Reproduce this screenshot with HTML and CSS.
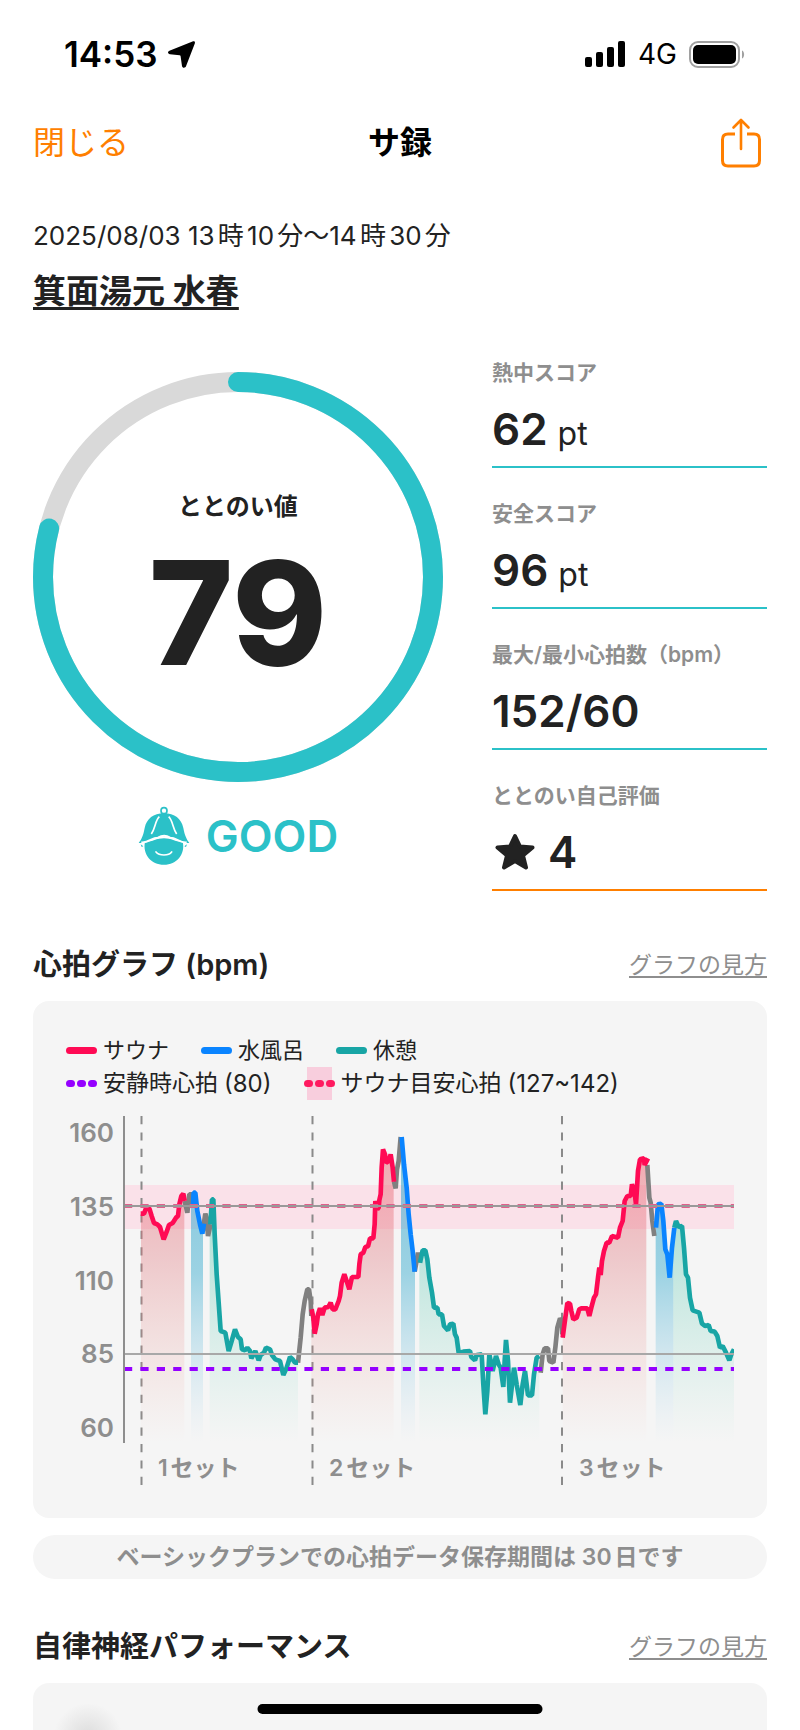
FILE: index.html
```html
<!DOCTYPE html>
<html lang="ja">
<head>
    <meta charset="UTF-8">
    <meta name="viewport" content="width=device-width, initial-scale=1.0">
    <title>サ録</title>
    <link rel="stylesheet" href="styles.css">
</head>
<body>
    <div class="app">
        <div class="status-bar">
            <div class="status-left">
                <span class="clock">14:53</span>
                <svg width="27" height="27" viewBox="0 0 27 27"><path d="M24.500 .6C26.200 -.2 27.400 .8 26.800 2.400L18 25.200C17.300 27.200 14.300 27.200 14 24.900L12.600 15.200C12.500 14.600 12.200 14.300 11.600 14.200L2 13.200C-.4 12.900 -.7 10.600 1.400 9.800Z"/></svg>
            </div>
            <div class="status-right">
                <svg width="41" height="26" viewBox="0 0 41 26">
                    <rect x="0" y="16" width="7" height="10" rx="2"/>
                    <rect x="11" y="11" width="7" height="15" rx="2"/>
                    <rect x="22" y="6" width="7" height="20" rx="2"/>
                    <rect x="33" y="0" width="7" height="26" rx="2"/>
                </svg>
                <span class="network">4G</span>
                <svg width="56" height="27" viewBox="0 0 56 27">
                    <rect x="1" y="1" width="49" height="25" rx="8" fill="none" stroke="#a0a0a0" stroke-width="2"/>
                    <rect x="4" y="4" width="43" height="19" rx="5"/>
                    <path d="M53 9.5C55.8 10.5 55.8 16.5 53 17.5Z" fill="#a0a0a0"/>
                </svg>
            </div>
        </div>

        <header class="nav">
            <button class="close" type="button">閉じる</button>
            <h1>サ録</h1>
            <button class="share" type="button" aria-label="共有">
                <svg width="40" height="50" viewBox="0 0 40 50" fill="none" stroke="#ff7f00" stroke-width="3" stroke-linecap="round" stroke-linejoin="round">
                    <path d="M14 16H7Q1.5 16 1.5 21.5V42.500Q1.500 48 7 48H33Q38.500 48 38.500 42.500V21.500Q38.500 16 33 16H26" stroke-linecap="butt"/>
                    <path d="M20 31V2.500M12.500 9.500L20 2L27.500 9.500" stroke-width="2.600"/>
                </svg>
            </button>
        </header>

        <main>
            <p class="date">2025/08/03 13時10分〜14時30分</p>
            <a class="venue" href="#">箕面湯元 水春</a>

            <section class="summary">
                <div class="total">
                    <div class="gauge">
                        <svg viewBox="0 0 410 410" fill="none" stroke-width="20">
                            <circle cx="205" cy="205" r="195" stroke="#d9d9d9"/>
                            <circle cx="205" cy="205" r="195" stroke="#2bc1c8" stroke-linecap="round" pathLength="100" stroke-dasharray="79 100" transform="rotate(-90 205 205)"/>
                        </svg>
                        <div class="gauge-text">
                            <span class="gauge-label">ととのい値</span>
                            <span class="gauge-value">79</span>
                        </div>
                    </div>
                    <div class="rank">
                        <svg width="52" height="60" viewBox="53 46 156 180">
                            <circle cx="131" cy="60" r="9" fill="none" stroke="#2bc1c8" stroke-width="5"/>
                            <path d="M131 68C163 68 183 84 189 112C193 134 199 146 207 157C194 157 187 154 180 150C164 148 151 137 131 137C111 137 97 148 82 150C76 154 68 157 55 157C64 146 69 134 73 112C79 84 99 68 131 68Z" fill="#2bc1c8"/>
                            <path d="M74 153C92 156 106 143 131 143C155 143 170 156 187 153C196 190 169 222 131 222C92 222 66 190 74 153Z" fill="#2bc1c8"/>
                            <path d="M61 161L69 167L64 169ZM200 161L192 167L197 169Z" fill="#2bc1c8"/>
                            <path d="M117 78C104 90 105 114 93 130M145 78C158 90 157 114 169 130" fill="none" stroke="#fff" stroke-width="5"/>
                            <path d="M63 155C84 158 95 140 113 141C126 133 137 133 149 141C167 140 180 158 199 155" fill="none" stroke="#fff" stroke-width="6"/>
                            <path d="M107 184C117 196 145 196 154 184" fill="none" stroke="#fff" stroke-width="5" stroke-linecap="round"/>
                        </svg>
                        <span>GOOD</span>
                    </div>
                </div>

                <dl class="scores">
                    <div class="score">
                        <dt>熱中スコア</dt>
                        <dd>62 <small>pt</small></dd>
                    </div>
                    <div class="score">
                        <dt>安全スコア</dt>
                        <dd>96 <small>pt</small></dd>
                    </div>
                    <div class="score">
                        <dt>最大/最小心拍数（bpm）</dt>
                        <dd>152/60</dd>
                    </div>
                    <div class="score self">
                        <dt>ととのい自己評価</dt>
                        <dd>
                            <svg width="46" height="38" viewBox="-3 0 46 38"><path d="M20 3L25 13.500L37.500 14.500L28 22.500L31 34.500L20 28L9 34.500L12 22.500L2.500 14.500L15 13.500Z" fill="#222" stroke="#222" stroke-width="4" stroke-linejoin="round"/></svg>
                            4
                        </dd>
                    </div>
                </dl>
            </section>

            <section class="block">
                <div class="block-head">
                    <h2>心拍グラフ (bpm)</h2>
                    <a href="#">グラフの見方</a>
                </div>
                <div class="card">
                    <ul class="legend">
                        <li><i class="bar sauna"></i>サウナ</li>
                        <li><i class="bar water"></i>水風呂</li>
                        <li><i class="bar rest"></i>休憩</li>
                    </ul>
                    <ul class="legend ranges">
                        <li><i class="dots resting"><b></b><b></b><b></b></i>安静時心拍 <span>(80)</span></li>
                        <li><i class="dots target"><b></b><b></b><b></b></i>サウナ目安心拍 <span>(127~142)</span></li>
                    </ul>

                    <svg class="chart" viewBox="0 0 668 372" role="img" aria-label="心拍グラフ">
                        <defs>
                            <linearGradient id="gSauna" gradientUnits="userSpaceOnUse" x1="0" y1="100" x2="0" y2="1024">
                                <stop offset="0" stop-color="#f06070" stop-opacity=".55"/>
                                <stop offset=".4" stop-color="#e07078" stop-opacity=".34"/>
                                <stop offset="1" stop-color="#f0a090" stop-opacity="0"/>
                            </linearGradient>
                            <linearGradient id="gWater" gradientUnits="userSpaceOnUse" x1="0" y1="100" x2="0" y2="1024">
                                <stop offset="0" stop-color="#2aa0c8" stop-opacity=".58"/>
                                <stop offset=".45" stop-color="#2aa6cc" stop-opacity=".44"/>
                                <stop offset="1" stop-color="#8cc8e8" stop-opacity="0"/>
                            </linearGradient>
                            <linearGradient id="gRest" gradientUnits="userSpaceOnUse" x1="0" y1="300" x2="0" y2="1024">
                                <stop offset="0" stop-color="#40c0a8" stop-opacity=".44"/>
                                <stop offset="1" stop-color="#80d8c0" stop-opacity="0"/>
                            </linearGradient>
                        </defs>

                        <!-- target zone -->
                        <rect x="58" y="69" width="610" height="44" fill="#fbdfe8" fill-opacity=".9"/>

                        <!-- set separators -->
                        <path d="M75.500 0V369M246.500 0V369M496 0V369" class="set-line"/>

                        <!-- filled areas -->
                        <g transform="translate(-16 -15) scale(.33333)">
                            <path fill="url(#gSauna)" d="M273 338H282L288 322H298L305 345L315 368L330 378L341 415L350 392L357 372L368 366L378 350L384 345L388 310L394 285L403 282V1024H273Z"/>
                            <path fill="url(#gWater)" d="M423 312L430 275H436L442 330L450 370L459 398V1024H423Z"/>
                            <path fill="url(#gRest)" d="M479 370L486 295H490L494 400L500 520L512 690L526 695L536 750L545 720L555 685L564 708L576 745L600 750L604 772L616 750L626 778L648 740L666 762L690 780L700 822L720 768L744 785V1024H479Z"/>
                            <g transform="translate(720 0)">
                                <path fill="url(#gSauna)" d="M64 625L74 698L84 640L97 642L122 605L136 625L150 585L163 520L178 565L186 528H205L212 460L240 412H250L256 300L268 298L275 200L279 145L288 185L302 160L311 242V1024H64Z"/>
                                <path fill="url(#gWater)" d="M333 108L342 190L350 260L356 340L362 400L368 450L375 512V1024H333Z"/>
                                <path fill="url(#gRest)" d="M388 485L398 448H406L418 530L432 620L456 640L474 688L490 668L506 755L540 750L555 778L575 760L586 940L598 760L608 810L618 765L632 800L640 858L648 717L660 905L672 800L691 912L705 810L714 883H726L740 770L748 770V1024H388Z"/>
                            </g>
                            <g transform="translate(1410 0)">
                                <path fill="url(#gSauna)" d="M128 710L142 606L150 608L160 655L184 622L202 620L208 645L228 580L238 500L252 450L260 425L276 405L294 410L308 360L314 300L332 285L336 250L348 310L360 175H379V1024H128Z"/>
                                <path fill="url(#gWater)" d="M407 380L414 310L424 308L436 445L449 530L460 380V1024H407Z"/>
                                <path fill="url(#gRest)" d="M460 380L468 360L486 375L498 520L518 628L538 635L546 668L566 672L592 705L600 740L628 778L642 745V1024H460Z"/>
                            </g>
                        </g>

                        <!-- heart rate line -->
                        <g class="trace" transform="translate(-16 -15) scale(.33333)">
                            <path class="t-move" d="M404 300L412 335L418 280H426L429 312M458 392L466 338L470 350L474 405L482 370M744 785L752 710L758 640L764 600L772 565H777L782 600L784 645"/>
                            <path class="t-sauna" d="M272 338H282L288 322H298L305 345L312 366L322 370L330 378L341 415L350 392L357 372L368 366L378 350L384 345L388 310L394 285L400 278L404 300"/>
                            <path class="t-water" d="M429 312L431 275H436L442 330L450 370L457 398L462 368"/>
                            <path class="t-rest" d="M481 370L486 295H490L494 400L500 520L512 690L526 695L536 750L545 720L555 685L564 708L572 715L576 745L585 748L592 740L600 750L604 772L616 750L626 778L632 762L642 755L648 740L660 745L666 762L676 775L690 780L700 822L710 800L720 768L728 775L735 785H744"/>
                            <g transform="translate(720 0)">
                                <path class="t-move" d="M312 242L317 262L321 205L326 180L332 108M374 512L378 490L384 455L390 485"/>
                                <path class="t-sauna" d="M65 625L70 650L74 698L80 670L84 640L90 622L97 642L104 620L115 618L122 605L128 625H136L146 600L150 585L155 545L163 520L170 540L178 565L186 528H205L208 490L212 460L220 455L226 438L234 436L240 412H250L254 370L256 300L262 325L266 320L268 298L272 280L275 200L279 145L285 160L288 185L296 180L302 160L308 200L312 242"/>
                                <path class="t-water" d="M335 108L342 190L350 260L356 340L362 400L368 450L374 512"/>
                                <path class="t-rest" d="M390 485L398 448H406L412 475L418 530L426 575L432 620H442L446 640H456L462 675L474 688L480 670L490 668L495 700L500 710L506 755L520 752L540 750L544 768L555 778L560 762L575 760L580 850L586 940L592 870L598 760L608 810L618 765L626 790L632 800L640 858L644 780L648 717L654 780L660 905L672 800L680 850L691 912L698 850L705 810L714 883H726L732 820L740 770L748 765"/>
                            </g>
                            <g transform="translate(1410 0)">
                                <path class="t-move" d="M62 815L68 760L74 742H84L88 780L100 785L106 740L112 680L120 652L126 660L127 700M382 192L388 290L392 305L397 360L403 405"/>
                                <path class="t-sauna" d="M128 710L136 650L142 606L150 608L154 630L160 655L170 650L178 625L184 622H202L208 645L214 620L222 590L228 580L234 530L238 500L242 522L246 480L252 450L260 425H268L276 405L294 410L300 380L308 360L314 300L322 285H332L336 250L344 275L348 310L354 210L360 175L372 172L374 192L384 172"/>
                                <path class="t-water" d="M408 380L414 310L424 308L430 360L436 445L442 460L449 530L456 440L463 380"/>
                                <path class="t-rest" d="M463 380L468 360L476 378L486 375L492 440L498 520L504 530L510 590L518 628L538 635L546 668L556 675L566 672L572 690L584 692L592 705L600 740L608 735L618 755L628 778L634 760L642 745"/>
                            </g>
                        </g>

                        <!-- grid lines and axis -->
                        <path d="M58 90H668" stroke="#e0608c" stroke-width="4" stroke-dasharray="8.200 8.200"/>
                        <path d="M58 90H668" stroke="#999" stroke-width="2"/>
                        <path d="M58 238H668" stroke="#a8a8a8" stroke-width="2"/>
                        <path d="M58 253H668" stroke="#9500ff" stroke-width="4" stroke-dasharray="8.200 8.200"/>
                        <path d="M58 0V327" stroke="#8e8e8e" stroke-width="2"/>

                        <g class="y-axis">
                            <text x="48" y="26">160</text>
                            <text x="48" y="100">135</text>
                            <text x="48" y="174">110</text>
                            <text x="48" y="247">85</text>
                            <text x="48" y="321">60</text>
                        </g>
                        <g class="sets">
                            <text x="92" y="360">1セット</text>
                            <text x="263" y="360">2セット</text>
                            <text x="513" y="360">3セット</text>
                        </g>
                    </svg>
                </div>
                <p class="notice">ベーシックプランでの心拍データ保存期間は 30日です</p>
            </section>

            <section class="block last">
                <div class="block-head">
                    <h2>自律神経パフォーマンス</h2>
                    <a href="#">グラフの見方</a>
                </div>
                <div class="card next"></div>
            </section>
        </main>
        <div class="home-indicator"></div>
    </div>
</body>
</html>
```
FILE: styles.css
```css
* {
    box-sizing: border-box;
}
body {
    margin: 0;
    background-color: #fff;
    color: #222;
    font-family: Inter, "Noto Sans CJK JP", sans-serif;
    text-autospace: normal;
}
h1, h2, p, ul, dl, dd {
    margin: 0;
    padding: 0;
}
button {
    padding: 0;
    border: none;
    background: none;
    font-family: inherit;
    cursor: pointer;
}
svg {
    display: block;
}
.app {
    display: flex;
    flex-direction: column;
    min-height: 100vh;
    padding: 37px 33px 0;
}

/* status bar */
.status-bar {
    display: flex;
    justify-content: space-between;
    padding: 0 22px 0 31px;
    color: #000;
    line-height: 34px;
}
.status-left, .status-right {
    display: flex;
    align-items: center;
    gap: 12px;
}
.status-left {
    gap: 10px;
}
.clock {
    font-size: 35px;
    font-weight: 600;
}
.network {
    font-size: 28px;
}

/* navigation */
.nav {
    display: grid;
    grid-template-columns: 1fr auto 1fr;
    align-items: center;
    margin-top: 47px;
}
.nav h1 {
    color: #000;
    font-size: 32px;
    font-weight: 700;
    line-height: 48px;
}
.close {
    justify-self: start;
    color: #ff7f00;
    font-size: 32px;
    line-height: 48px;
}
.share {
    justify-self: end;
    margin-right: 6px;
}

main {
    display: flex;
    flex: 1;
    flex-direction: column;
    align-items: stretch;
}
.date {
    margin-top: 53px;
    font-size: 26px;
    line-height: 30px;
}
.venue {
    align-self: flex-start;
    margin-top: 20px;
    color: #222;
    font-size: 33px;
    font-weight: 700;
    line-height: 40px;
    text-decoration-thickness: 3px;
    text-underline-offset: 4px;
}

/* score summary */
.summary {
    display: grid;
    grid-template-columns: 410fr 275fr;
    gap: 49px;
    margin-top: 50px;
}
.total {
    padding-top: 11px;
}
.gauge {
    display: grid;
}
.gauge svg, .gauge-text {
    grid-area: 1 / 1;
    width: 100%;
}
.gauge-text {
    display: flex;
    flex-direction: column;
    align-items: center;
    justify-content: center;
    padding-top: 40px;
}
.gauge-label {
    font-size: 24px;
    font-weight: 600;
    line-height: 32px;
}
.gauge-value {
    font-size: 144px;
    font-weight: 800;
    line-height: 180px;
}
.rank {
    display: flex;
    align-items: center;
    justify-content: center;
    gap: 16px;
    margin-top: 24px;
    color: #2bc1c8;
    font-size: 44px;
    font-weight: 600;
    line-height: 60px;
}
.scores {
    display: flex;
    flex-direction: column;
    gap: 34px;
}
.score {
    border-bottom: 2px solid #2bc1c8;
}
.score dt {
    color: #8e8e8e;
    font-size: 21px;
    font-weight: 600;
    line-height: 24px;
    white-space: nowrap;
}
.score dd {
    display: flex;
    align-items: baseline;
    gap: 10px;
    padding: 16px 0 9px;
    font-size: 44px;
    font-weight: 600;
    line-height: 56px;
}
.score small {
    font-size: 32px;
    font-weight: 400;
    line-height: 32px;
}
.self {
    border-color: #ff7f00;
}
.self dd {
    align-items: center;
}

/* sections */
.block {
    margin-top: 56px;
}
.block-head {
    display: flex;
    align-items: center;
    justify-content: space-between;
    margin-bottom: 18px;
    line-height: 36px;
}
.block-head h2 {
    font-size: 29px;
    font-weight: 600;
}
.block-head a {
    color: #8e8e8e;
    font-size: 23px;
    text-underline-offset: 3px;
}
.card {
    padding: 33px 33px 30px;
    border-radius: 16px;
    background-color: #f5f5f5;
}
.legend {
    display: flex;
    gap: 32px;
    list-style: none;
    font-size: 22px;
    line-height: 33px;
}
.legend li {
    display: flex;
    align-items: center;
    gap: 6px;
}
.ranges {
    font-size: 23px;
}
.ranges span {
    font-size: 24px;
}
.bar {
    width: 31px;
    height: 7px;
    border-radius: 4px;
}
.sauna {
    background-color: #ff0a54;
}
.water {
    background-color: #0a84ff;
}
.rest {
    background-color: #18a5a5;
}
.dots {
    display: flex;
    align-items: center;
    justify-content: center;
    gap: 2px;
    width: 31px;
    height: 33px;
}
.dots b {
    width: 9px;
    height: 7px;
    border-radius: 4px;
}
.resting b {
    background-color: #9500ff;
}
.target {
    background: linear-gradient(#f8cedd, #f8cedd) center / 25px 33px no-repeat;
}
.target b {
    background-color: #ff1a60;
}

/* chart */
.chart {
    width: 100%;
    margin-top: 16px;
}
.set-line {
    fill: none;
    stroke: #8a8a8a;
    stroke-width: 2;
    stroke-dasharray: 8.2 8.2;
}
.trace path {
    fill: none;
    stroke-width: 14;
    stroke-linejoin: bevel;
}
.trace .t-sauna {
    stroke: #ff0a54;
}
.trace .t-water {
    stroke: #0a84ff;
}
.trace .t-rest {
    stroke: #18a5a5;
}
.trace .t-move {
    stroke: #808080;
}
.y-axis, .sets {
    fill: #8e8e8e;
    font-size: 26px;
    font-weight: 600;
}
.y-axis {
    text-anchor: end;
}
.sets {
    font-size: 23px;
}
.notice {
    margin-top: 17px;
    border-radius: 22px;
    background-color: #f5f5f5;
    color: #8e8e8e;
    font-size: 23px;
    font-weight: 600;
    line-height: 44px;
    text-align: center;
}
.last {
    display: flex;
    flex: 1;
    flex-direction: column;
    margin-top: 50px;
}
.next {
    flex: 1;
    padding: 0;
    border-radius: 16px 16px 0 0;
    background: radial-gradient(circle at 55px 54px, #dcdcdc 0, #f5f5f5 34px);
}
.home-indicator {
    position: fixed;
    bottom: 16px;
    left: 50%;
    width: 285px;
    height: 10px;
    border-radius: 5px;
    background-color: #000;
    transform: translateX(-50%);
}
```
